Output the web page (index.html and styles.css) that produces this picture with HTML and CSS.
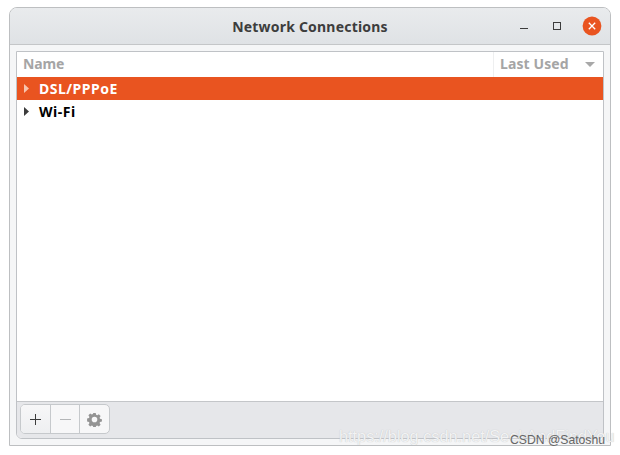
FILE: index.html
```html
<!DOCTYPE html>
<html lang="en">
<head>
<meta charset="utf-8">
<title>Network Connections</title>
<link rel="stylesheet" href="styles.css">
</head>
<body>
<div class="window">
  <header class="titlebar">
    <div class="title">Network Connections</div>
    <div class="controls">
      <svg class="ctl" width="20" height="20" viewBox="0 0 20 20"><path d="M8 12.500h8" stroke="#3c3c3c" stroke-width="1" fill="none"/></svg>
      <svg class="ctl" width="20" height="20" viewBox="0 0 20 20"><rect x="6.500" y="6.500" width="7" height="7" stroke="#3c3c3c" stroke-width="1" fill="none"/></svg>
      <svg class="ctl" width="20" height="20" viewBox="0 0 20 20"><circle cx="10" cy="10" r="9.400" fill="#e95420"/><path d="M6.800 6.800l6.400 6.400M13.200 6.800l-6.400 6.400" stroke="#fff" stroke-width="1.300" fill="none"/></svg>
    </div>
  </header>
  <main class="content">
    <div class="panel">
      <div class="head">
        <div class="head-name">Name</div>
        <div class="head-used">Last Used<svg class="sort" width="10" height="5" viewBox="0 0 10 5"><path d="M0 0h10L5 5z" fill="#a8a8a8"/></svg></div>
      </div>
      <div class="list">
        <div class="row selected"><svg class="arrow" width="5" height="9" viewBox="0 0 5 9"><path d="M0 0l5 4.500L0 9z" fill="#f7c4ae"/></svg>DSL/PPPoE</div>
        <div class="row"><svg class="arrow" width="5" height="9" viewBox="0 0 5 9"><path d="M0 0l5 4.500L0 9z" fill="#3c3c3c"/></svg>Wi-Fi</div>
      </div>
      <div class="toolbar">
        <div class="btns">
          <div class="btn first"><svg width="13" height="13" viewBox="0 0 13 13"><path d="M6.500 1v11M1 6.500h11" stroke="#3c3c3c" fill="none"/></svg></div>
          <div class="btn"><svg width="13" height="13" viewBox="0 0 13 13"><path d="M1 6.500h11" stroke="#b4b6b8" fill="none"/></svg></div>
          <div class="btn last"><svg width="15" height="15" viewBox="0 0 16 16"><path fill="#949494" fill-rule="evenodd" d="M6.700 1h2.600l.4 2 1.200.5 1.700-1.100 1.900 1.900-1.100 1.700.5 1.200 2 .4v2.600l-2 .4-.5 1.200 1.100 1.700-1.900 1.900-1.700-1.100-1.200.5-.4 2H6.700l-.4-2-1.200-.5-1.700 1.100-1.900-1.900 1.100-1.700-.5-1.200-2-.4V6.800l2-.4.5-1.200-1.100-1.700 1.900-1.900 1.700 1.100 1.200-.5zM8 5a3 3 0 1 0 0 6 3 3 0 0 0 0-6z"/></svg></div>
        </div>
      </div>
    </div>
  </main>
</div>
<div class="mark">https://blog.csdn.net/SeekAndFindYou</div>
<div class="credit">CSDN @Satoshu</div>
</body>
</html>
```
FILE: styles.css
```css
html, body { margin: 0; padding: 0; background: #fff; }
body { width: 620px; height: 455px; overflow: hidden; position: relative; font-family: "Noto Sans", sans-serif; }
.window { margin: 7px 0 0 9px; width: 602px; height: 439px; box-sizing: border-box; border: 1px solid #bdbfc1; border-radius: 8px 8px 0 0; background: #f5f6f7; display: flex; flex-direction: column; }
.titlebar { height: 37px; flex: none; box-sizing: border-box; border-bottom: 1px solid #c4c6c8; border-radius: 7px 7px 0 0; background: linear-gradient(#e9ebed, #dfe2e5); display: flex; align-items: center; justify-content: center; position: relative; }
.title { font-size: 14px; font-weight: 700; color: #3d3d3d; letter-spacing: .2px; }
.controls { position: absolute; right: 8px; top: 8px; display: flex; gap: 15px; }
.ctl { display: block; }
.content { flex: 1; padding: 6px; display: flex; min-height: 0; }
.panel { flex: 1; box-sizing: border-box; border: 1px solid #bfc2c6; border-radius: 0 0 6px 6px; background: #fff; display: flex; flex-direction: column; }
.head { height: 25px; flex: none; display: flex; font-size: 14px; font-weight: 700; color: #a5a5a5; }
.head-name { flex: 1; padding: 2px 0 0 6px; letter-spacing: -.1px; }
.head-used { width: 110px; box-sizing: border-box; padding: 2px 0 0 6px; border-left: 1px solid #eeeff0; display: flex; align-items: flex-start; letter-spacing: .1px; }
.sort { margin: 8px 0 0 16px; }
.list { flex: 1; }
.row { height: 23px; display: flex; align-items: center; font-size: 14px; font-weight: 700; color: #000; letter-spacing: .5px; }
.row.selected { background: #e95420; color: #fff; }
.arrow { margin: 0 10px 0 7px; flex: none; }
.toolbar { height: 37px; flex: none; box-sizing: border-box; border-top: 1px solid #c4c6c9; border-radius: 0 0 5px 5px; background: #e6e7ea; padding: 2px 3px; }
.btns { display: flex; height: 30px; width: 90px; box-sizing: border-box; border: 1px solid #c6c9cc; border-radius: 5px; background: #f7f7f8; }
.btn { flex: 1; display: flex; align-items: center; justify-content: center; border-left: 1px solid #c6c9cc; }
.btn.first { border-left: 0; background: linear-gradient(#f7f7f8, #eeeff1); border-radius: 4px 0 0 4px; }
.mark { position: absolute; left: 339px; top: 427px; font: 16.300px "Liberation Sans", sans-serif; color: #f2f3f4; text-shadow: 0 0 1px #bbbcbe; white-space: nowrap; }
.credit { position: absolute; left: 510px; top: 433px; font: 12.200px "Liberation Sans", sans-serif; color: #666; white-space: nowrap; }
```
